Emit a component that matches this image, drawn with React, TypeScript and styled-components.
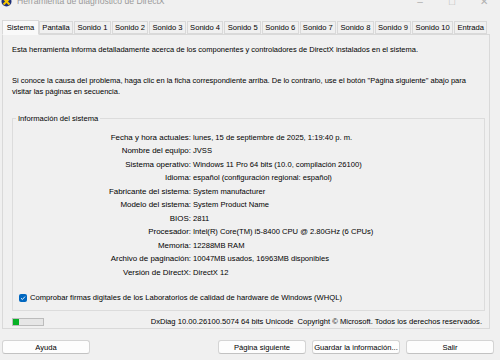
import styled, { createGlobalStyle } from "styled-components";

const GlobalStyle = createGlobalStyle`
  html, body {
    margin: 0;
    padding: 0;
    background: #f0f0f0;
  }
  body {
    font-family: "Liberation Sans", Arial, sans-serif;
    font-size: 7.6px;
    color: #000;
  }
`;

const Window = styled.div`
  width: 500px;
  height: 360px;
  overflow: hidden;
  display: flex;
  flex-direction: column;
  background: #f0f0f0;
`;

const TitleBar = styled.div`
  height: 20px;
  margin-top: -9px;
  display: flex;
  align-items: center;
  padding-left: 1px;
`;

const TitleText = styled.span`
  margin-left: 5px;
  font-size: 8.6px;
  color: #9b9b9b;
`;

const Controls = styled.div`
  margin-left: auto;
  display: flex;
`;

const ControlBtn = styled.span`
  width: 32px;
  text-align: center;
  color: #b0b0b0;
  font-size: 10px;
`;

const TabStrip = styled.div`
  display: flex;
  align-items: flex-end;
  height: 15px;
  margin-top: 8px;
  padding-left: 4px;
  position: relative;
  z-index: 1;
`;

const Tab = styled.div<{ $active?: boolean }>`
  height: ${(p) => (p.$active ? "15px" : "13px")};
  line-height: ${(p) => (p.$active ? "14px" : "12px")};
  padding: 0 ${(p) => (p.$active ? "3.8px" : "2.3px")};
  margin: ${(p) => (p.$active ? "0 -1px 0 -2px" : "0 0 0 1px")};
  background: ${(p) => (p.$active ? "#f9f9f9" : "#f0f0f0")};
  border: 1px solid #d9d9d9;
  border-bottom-color: ${(p) => (p.$active ? "#f9f9f9" : "#d9d9d9")};
  box-sizing: border-box;
  white-space: nowrap;
  margin-bottom: ${(p) => (p.$active ? "-1px" : "0")};
`;

const Panel = styled.div`
  margin: 0 10px 0 2px;
  height: 295px;
  box-sizing: border-box;
  border: 1px solid #d9d9d9;
  padding: 9px 4px 4px 9px;
  display: flex;
  flex-direction: column;
  line-height: 11.7px;
`;

const Para = styled.p<{ $gap?: number }>`
  margin: ${(p) => p.$gap ?? 0}px 0 0 0;
  font-size: 7.5px;
  white-space: nowrap;
`;

const Group = styled.fieldset`
  margin: 15px 0 0 0;
  padding: 6px 0 6px 0;
  border: 1px solid #dcdcdc;
  min-width: 0;
`;

const Legend = styled.legend`
  margin-left: 3px;
  padding: 0 2px;
`;

const InfoGrid = styled.div`
  display: grid;
  grid-template-columns: 178px 1fr;
  column-gap: 2px;
  grid-auto-rows: 13.5px;
  align-items: center;
`;

const Label = styled.span`
  text-align: right;
  white-space: nowrap;
  font-size: 7.95px;
`;

const Value = styled.span`
  white-space: nowrap;
`;

const CheckRow = styled.label`
  display: flex;
  align-items: center;
  gap: 3px;
  margin: 13px 0 0 6px;
  height: 12px;
`;

const CheckBox = styled.span`
  width: 8px;
  height: 8px;
  border-radius: 2px;
  background: #0067c0;
  display: flex;
  align-items: center;
  justify-content: center;
`;

const Footer = styled.div`
  display: flex;
  align-items: center;
  margin-top: 6px;
  height: 10px;
  padding-right: 3px;
`;

const Progress = styled.div`
  width: 32px;
  height: 8px;
  box-sizing: border-box;
  border: 1px solid #bcbcbc;
  background: #e6e6e6;
  display: flex;
`;

const ProgressFill = styled.div`
  background: #06b025;
`;

const Version = styled.span`
  margin-left: auto;
`;

const ButtonRow = styled.div`
  display: flex;
  gap: 6px;
  margin-top: 11px;
  padding: 0 6px 0 2px;
`;

const Button = styled.button<{ $push?: boolean }>`
  width: 88px;
  height: 14px;
  padding: 0;
  box-sizing: border-box;
  border: 1px solid #d4d4d4;
  border-bottom-color: #c2c2c2;
  border-radius: 3px;
  background: #fdfdfd;
  font: inherit;
  color: #000;
  margin-left: ${(p) => (p.$push ? "auto" : "0")};
`;

const tabs = [
  "Sistema",
  "Pantalla",
  "Sonido 1",
  "Sonido 2",
  "Sonido 3",
  "Sonido 4",
  "Sonido 5",
  "Sonido 6",
  "Sonido 7",
  "Sonido 8",
  "Sonido 9",
  "Sonido 10",
  "Entrada",
];

const info: [string, string][] = [
  ["Fecha y hora actuales:", "lunes, 15 de septiembre de 2025, 1:19:40 p. m."],
  ["Nombre del equipo:", "JVSS"],
  ["Sistema operativo:", "Windows 11 Pro 64 bits (10.0, compilación 26100)"],
  ["Idioma:", "español (configuración regional: español)"],
  ["Fabricante del sistema:", "System manufacturer"],
  ["Modelo del sistema:", "System Product Name"],
  ["BIOS:", "2811"],
  ["Procesador:", "Intel(R) Core(TM) i5-8400 CPU @ 2.80GHz (6 CPUs)"],
  ["Memoria:", "12288MB RAM"],
  ["Archivo de paginación:", "10047MB usados, 16963MB disponibles"],
  ["Versión de DirectX:", "DirectX 12"],
];

function DxIcon() {
  return (
    <svg width="11" height="11" viewBox="0 0 11 11">
      <circle cx="5.5" cy="5.5" r="5" fill="#1c2f7a" />
      <path d="M2.5 2.5 L8.5 8.5 M8.5 2.5 L2.5 8.5" stroke="#f5c400" strokeWidth="2" />
    </svg>
  );
}

export default function App() {
  return (
    <>
      <GlobalStyle />
      <Window>
        <TitleBar>
          <DxIcon />
          <TitleText>Herramienta de diagnóstico de DirectX</TitleText>
          <Controls>
            <ControlBtn>–</ControlBtn>
            <ControlBtn>□</ControlBtn>
            <ControlBtn>✕</ControlBtn>
          </Controls>
        </TitleBar>

        <TabStrip>
          {tabs.map((t, i) => (
            <Tab key={t} $active={i === 0}>
              {t}
            </Tab>
          ))}
        </TabStrip>

        <Panel>
          <Para>
            Esta herramienta informa detalladamente acerca de los componentes y controladores de
            DirectX instalados en el sistema.
          </Para>
          <Para $gap={19}>
            Si conoce la causa del problema, haga clic en la ficha correspondiente arriba. De lo
            contrario, use el botón "Página siguiente" abajo para
            <br />
            visitar las páginas en secuencia.
          </Para>

          <Group>
            <Legend>Información del sistema</Legend>
            <InfoGrid>
              {info.map(([k, v]) => (
                <>
                  <Label key={k}>{k}</Label>
                  <Value key={k + "v"}>{v}</Value>
                </>
              ))}
            </InfoGrid>
            <CheckRow>
              <CheckBox>
                <svg width="6" height="6" viewBox="0 0 6 6">
                  <path d="M1 3.2 L2.4 4.5 L5 1.6" stroke="#fff" strokeWidth="0.9" fill="none" />
                </svg>
              </CheckBox>
              Comprobar firmas digitales de los Laboratorios de calidad de hardware de Windows (WHQL)
            </CheckRow>
          </Group>

          <Footer>
            <Progress>
              <ProgressFill style={{ width: `${(6 / 30) * 100}%` }} />
            </Progress>
            <Version>
              DxDiag 10.00.26100.5074 64 bits Unicode&nbsp; Copyright © Microsoft. Todos los
              derechos reservados.
            </Version>
          </Footer>
        </Panel>

        <ButtonRow>
          <Button>Ayuda</Button>
          <Button $push>Página siguiente</Button>
          <Button>Guardar la información...</Button>
          <Button>Salir</Button>
        </ButtonRow>
      </Window>
    </>
  );
}
